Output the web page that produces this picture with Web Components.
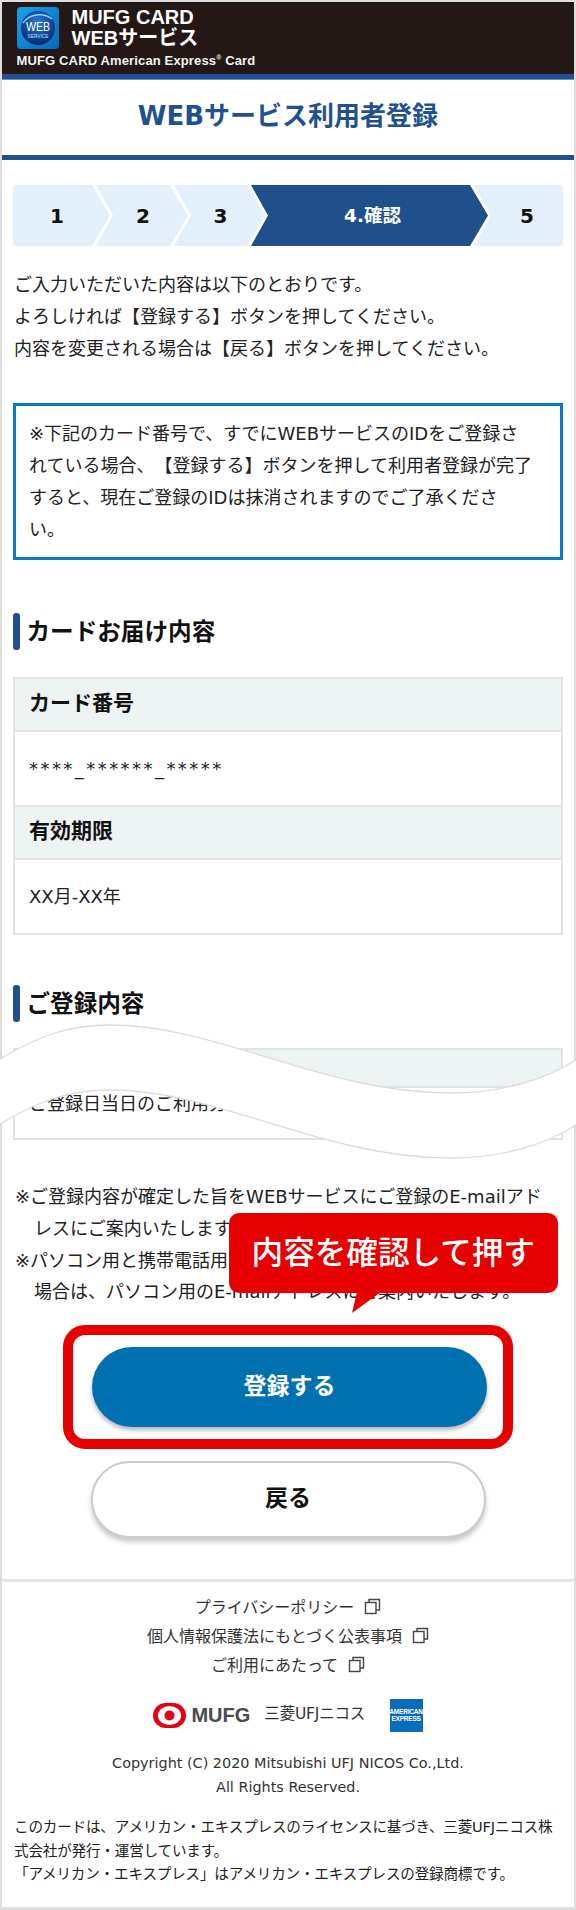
<!DOCTYPE html>
<html lang="ja">
<head>
<meta charset="utf-8">
<title>WEBサービス利用者登録</title>
<style>
html,body{margin:0;padding:0;background:#dedede;}
body{font-family:"DejaVu Sans","Noto Sans CJK JP","Noto Sans",sans-serif;color:#222;font-size:18px;line-height:32px;padding:2px;width:572px;height:1906px;box-sizing:content-box;text-spacing-trim:space-all;}
</style>
</head>
<body>
<mufg-page>
  <site-header></site-header>
  <page-title>WEBサービス利用者登録</page-title>
  <step-bar style="margin-top:25px">
    <step-item w="97" first>1</step-item>
    <step-item w="92">2</step-item>
    <step-item w="91">3</step-item>
    <step-item w="237" active>4.確認</step-item>
    <step-item w="89" last>5</step-item>
  </step-bar>
  <text-block style="margin-top:23px">ご入力いただいた内容は以下のとおりです。<br>よろしければ【登録する】ボタンを押してください。<br>内容を変更される場合は【戻る】ボタンを押してください。</text-block>
  <notice-box style="margin-top:38px">※下記のカード番号で、すでにWEBサービスのIDをご登録さ<br>れている場合、【登録する】ボタンを押して利用者登録が完了<br>すると、現在ご登録のIDは抹消されますのでご了承くださ<br>い。</notice-box>
  <section-heading style="margin-top:53px">カードお届け内容</section-heading>
  <info-table style="margin-top:27px">
    <info-row label="カード番号"><span style="letter-spacing:2.45px">****_******_*****</span></info-row>
    <info-row label="有効期限">XX月-XX年</info-row>
  </info-table>
  <section-heading style="margin-top:50px">ご登録内容</section-heading>
  <info-table style="margin-top:26px">
    <info-row label="ご利用明細" compact>ご登録日当日のご利用分から</info-row>
  </info-table>
  <note-list style="margin-top:39px">
    <note-item>※ご登録内容が確定した旨をWEBサービスにご登録のE-mailアド<br>レスにご案内いたします。</note-item>
    <note-item>※パソコン用と携帯電話用のE-mailアドレスをご登録いただいた<br>場合は、パソコン用のE-mailアドレスにご案内いたします。</note-item>
  </note-list>
  <action-area>
    <pill-button primary>登録する</pill-button>
  </action-area>
  <pill-button style="margin:12px auto 0;width:395px">戻る</pill-button>
  <site-footer></site-footer>
  <wave-cut></wave-cut>
  <call-out>内容を確認して押す</call-out>
</mufg-page>
<script>
const def=(name,html,init)=>customElements.define(name,class extends HTMLElement{
  constructor(){super();this.attachShadow({mode:'open'}).innerHTML=html;}
  connectedCallback(){init&&init.call(this);}
});
def('mufg-page',`<style>:host{display:block;position:relative;background:#fff;width:572px;height:1905px;overflow:visible}</style><slot></slot>`);
def('site-header',`<style>
:host{display:block;background:#231815;height:72px;border-bottom:5px solid #1f5190;box-shadow:0 1px 0 #6d92c6;margin-bottom:1px;color:#fff;box-sizing:content-box}
.top{display:flex;gap:13px;padding:5px 0 0 14.5px;height:42px}
.logo{width:42px;height:42px;flex:none;display:block}
.name{font:bold 20px/21px "Liberation Sans","Noto Sans CJK JP",sans-serif;padding-top:0}
.sub{font:bold 13px/16px "Liberation Sans",sans-serif;padding:4px 0 0 14.5px;letter-spacing:.14px;color:#f2f2f2}
sup{font-size:7px;line-height:0;vertical-align:5px}
</style>
<div class="top">
<svg class="logo" viewBox="0 0 42 42"><defs><linearGradient id="g" x1="0" y1="0" x2="1" y2="1"><stop offset="0" stop-color="#1ba0e8"/><stop offset="1" stop-color="#0568c0"/></linearGradient><radialGradient id="r" cx=".5" cy=".35" r=".7"><stop offset="0" stop-color="#2e7fd0"/><stop offset=".7" stop-color="#0a3d8a"/><stop offset="1" stop-color="#04265e"/></radialGradient></defs>
<rect width="42" height="42" rx="4" fill="url(#g)"/><circle cx="21" cy="21" r="17" fill="url(#r)"/><path d="M6 16C12 7 26 5 35 12" stroke="#8fd0f5" stroke-width="1.5" fill="none"/>
<text x="21" y="24" text-anchor="middle" font-family="Liberation Sans" font-size="12" fill="#fff" textLength="24" lengthAdjust="spacingAndGlyphs">WEB</text><text x="21" y="31" text-anchor="middle" font-family="Liberation Sans" font-size="5" fill="#bfe2fa" textLength="21" lengthAdjust="spacingAndGlyphs">SERVICE</text></svg>
<div class="name">MUFG CARD<br>WEBサービス</div></div>
<div class="sub">MUFG CARD American Express<sup>®</sup> Card</div>`);
def('page-title',`<style>:host{display:flex;align-items:center;justify-content:center;height:71px;padding-bottom:4px;border-bottom:5px solid #1f5190;color:#1f5190;font-weight:700;font-size:26px;line-height:32px;box-sizing:content-box}</style><slot></slot>`);
def('step-bar',`<style>:host{display:flex;height:61px;margin:0 11px;border-radius:4px;overflow:hidden}</style><slot></slot>`);
def('step-item',`<style>
:host{display:flex;align-items:center;justify-content:center;height:61px;flex:none;background:#e3f0fb;color:#111;font-weight:700;font-size:20px;margin-left:-14px;box-sizing:border-box;padding-left:14px;padding-right:12px;
clip-path:polygon(0 0,calc(100% - 18px) 0,100% 50%,calc(100% - 18px) 100%,0 100%,17px 50%)}
:host([first]){margin-left:0;padding-left:0;padding-right:9px;clip-path:polygon(0 0,calc(100% - 18px) 0,100% 50%,calc(100% - 18px) 100%,0 100%)}
:host([last]){padding-left:17px;padding-right:0;clip-path:polygon(0 0,100% 0,100% 100%,0 100%,17px 50%)}
:host([active]){background:#20508c;color:#fff;padding-left:6px;padding-right:0;font-size:18.5px}
</style><slot></slot>`,function(){this.style.width=this.getAttribute('w')+'px'});
def('text-block',`<style>:host{display:block;padding:0 12px;font-size:18px;line-height:32px;color:#222;white-space:nowrap}</style><slot></slot>`);
def('notice-box',`<style>:host{display:block;margin:0 11px;border:3px solid #0a77cf;padding:12px 0 11px 13px;font-size:18px;line-height:32px;color:#222;white-space:nowrap;height:128px;box-sizing:content-box}</style><slot></slot>`);
def('section-heading',`<style>:host{display:flex;align-items:center;gap:6.5px;margin-left:11px;height:37px;font-weight:700;font-size:23.6px;color:#111;line-height:37px}
i{width:7px;height:37px;border-radius:3px;background:#20508c;flex:none}
span{padding-top:2px;line-height:35px}</style><i></i><span><slot></slot></span>`);
def('info-table',`<style>:host{display:block;margin:0 11px;border:2px solid #dfe3e5;border-top:0;box-sizing:border-box}</style><slot></slot>`);
def('info-row',`<style>
:host{display:block}
.l{background:#edf2f3;border-top:2px solid #dfe3e5;border-bottom:2px solid #dfe3e5;height:51px;box-sizing:border-box;height:55px;display:flex;align-items:center;padding:0 0 3px 14px;font-weight:700;font-size:21px;color:#111}
.v{height:73px;display:flex;align-items:center;padding-left:14px;font-size:18px;color:#222}
:host([compact]) .l{height:40px}
:host([compact]) .v{height:50px;align-items:flex-start}
</style><div class="l"></div><div class="v"><slot></slot></div>`,function(){this.shadowRoot.querySelector('.l').textContent=this.getAttribute('label')});
def('note-list',`<style>:host{display:block;box-sizing:border-box;padding:2px 12px 0 13px;height:128px}</style><slot></slot>`);
def('note-item',`<style>:host{display:block;font-size:18px;line-height:31.8px;color:#222;padding-left:19px;text-indent:-19px;white-space:nowrap}</style><slot></slot>`);
def('action-area',`<style>:host{display:block;margin:18px auto 0;width:450px;height:124px;box-sizing:border-box;border:10px solid #e60000;border-radius:22px;padding:12px 19px 0}
::slotted(*){width:395px;margin-left:0}</style><slot></slot>`);
def('pill-button',`<style>:host{display:flex;align-items:center;justify-content:center;height:77px;box-sizing:border-box;padding-bottom:3px;background:#fff;border:2px solid #ccc;border-radius:40px;box-shadow:0 4px 5px rgba(0,0,0,.22);font-weight:700;font-size:23px;color:#111}
:host([primary]){height:80px;background:#0071b0;border:0;color:#fff;box-shadow:0 3px 4px rgba(0,0,0,.3)}</style><slot></slot>`);
def('site-footer',`<style>
:host{position:absolute;left:0;right:0;top:1577px;bottom:0;display:block;border-top:3px solid #e6e6e6;color:#333}
.links{display:flex;flex-direction:column;align-items:center;padding-top:11px;font-size:16px;line-height:29px}
.link{display:flex;align-items:center;gap:10px}
.link svg{width:17px;height:17px;margin-top:-3px}
.logos{display:flex;align-items:center;justify-content:center;margin-top:18px;height:34px;color:#444}
.mufg{font:bold 20px/1 "Liberation Sans",sans-serif;color:#4a4a4a;margin:0 14px 0 5px}
.nicos{font-size:15.5px;line-height:1;color:#333;margin-right:24.5px;white-space:nowrap;letter-spacing:-.2px}
.amex{width:33px;height:33px;background:#0a6cb8;color:#fff;font:bold 6.5px/7px "Liberation Sans",sans-serif;display:flex;flex-direction:column;align-items:center;justify-content:center;white-space:nowrap;overflow:hidden;letter-spacing:-.2px}
.copy{text-align:center;font:14.4px/24px "DejaVu Sans",sans-serif;margin-top:19px;color:#333}
.legal{font-size:14.6px;line-height:23.6px;margin:16px 0 0 12px;white-space:nowrap;color:#222;letter-spacing:-.2px}
</style>
<div class="links">
 <div class="link">プライバシーポリシー<svg viewBox="0 0 17 17" fill="none" stroke="#444" stroke-width="1.4"><path d="M5 4V1.5H15.5V12H12"/><rect x="1.5" y="4.5" width="10.5" height="11"/></svg></div>
 <div class="link">個人情報保護法にもとづく公表事項<svg viewBox="0 0 17 17" fill="none" stroke="#444" stroke-width="1.4"><path d="M5 4V1.5H15.5V12H12"/><rect x="1.5" y="4.5" width="10.5" height="11"/></svg></div>
 <div class="link">ご利用にあたって<svg viewBox="0 0 17 17" fill="none" stroke="#444" stroke-width="1.4"><path d="M5 4V1.5H15.5V12H12"/><rect x="1.5" y="4.5" width="10.5" height="11"/></svg></div>
</div>
<div class="logos">
 <svg width="33" height="25" viewBox="0 0 33 25"><rect x="0" y="0" width="33" height="25" rx="12.5" fill="#e60012"/><ellipse cx="16.5" cy="12.5" rx="11.5" ry="9.5" fill="#fff"/><circle cx="16.5" cy="12.5" r="5" fill="#e60012"/></svg>
 <span class="mufg">MUFG</span><span class="nicos">三菱UFJニコス</span>
 <div class="amex"><span>AMERICAN</span><span>EXPRESS</span></div>
</div>
<div class="copy">Copyright (C) 2020 Mitsubishi UFJ NICOS Co.,Ltd.<br>All Rights Reserved.</div>
<div class="legal">このカードは、アメリカン・エキスプレスのライセンスに基づき、三菱UFJニコス株<br>式会社が発行・運営しています。<br>「アメリカン・エキスプレス」はアメリカン・エキスプレスの登録商標です。</div>`);
def('wave-cut',`<style>:host{position:absolute;left:-2px;top:1018px;width:576px;height:145px;display:block;pointer-events:none}svg{display:block}</style>
<svg width="576" height="145" viewBox="0 0 576 145"><path d="M0 39C40 15 70 5 110 5C220 5 320 73 452 73C500 73 545 60 576 40V105C545 125 500 138 452 138C320 138 220 70 110 70C70 70 40 80 0 104Z" fill="#fff"/><path d="M0 39C40 15 70 5 110 5C220 5 320 73 452 73C500 73 545 60 576 40M0 104C40 80 70 70 110 70C220 70 320 138 452 138C500 138 545 125 576 105" fill="none" stroke="#dcdcdc" stroke-width="1.3"/></svg>`);
def('call-out',`<style>:host{position:absolute;left:226.5px;top:1211px;width:329.5px;height:80px;background:#e60000;border-radius:10px;color:#fff;font-weight:500;font-size:31.6px;display:flex;align-items:center;justify-content:center;white-space:nowrap}
svg{position:absolute;left:120px;top:79px}</style><slot></slot><svg width="34" height="22" viewBox="0 0 34 22"><path d="M8 0H32L3 21Z" fill="#e60000"/></svg>`);
</script>
</body>
</html>
